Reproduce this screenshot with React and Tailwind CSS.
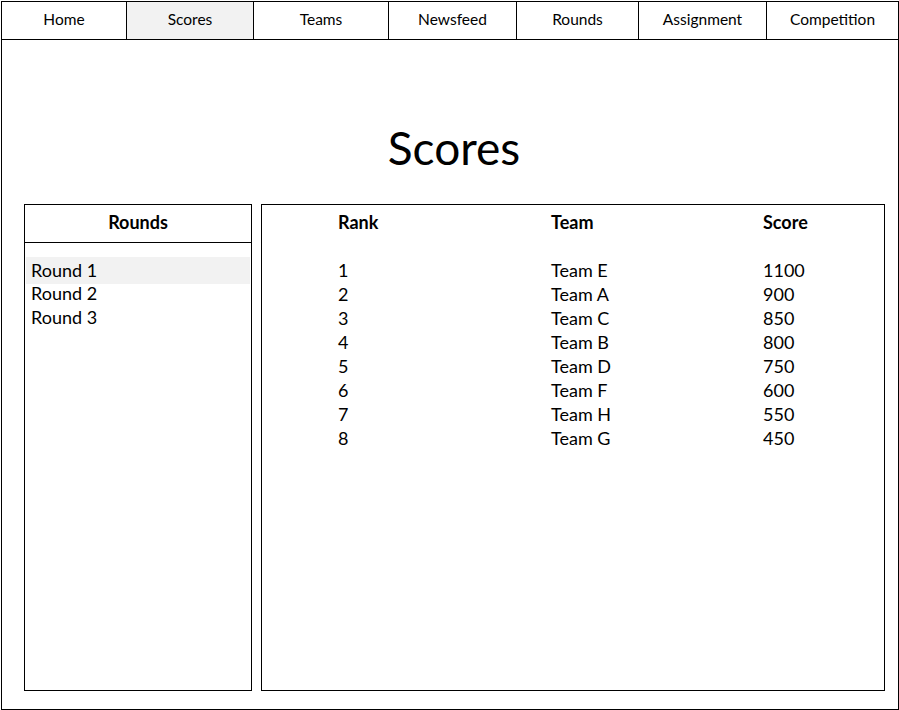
import React, { useState } from 'react';

const tabs = [
  { label: 'Home', w: 'w-[125px]' },
  { label: 'Scores', w: 'w-[127px]' },
  { label: 'Teams', w: 'w-[135px]' },
  { label: 'Newsfeed', w: 'w-[128px]' },
  { label: 'Rounds', w: 'w-[122px]' },
  { label: 'Assignment', w: 'w-[128px]' },
  { label: 'Competition', w: 'flex-1' },
];

const scores = [
  { rank: 1, team: 'Team E', score: 1100 },
  { rank: 2, team: 'Team A', score: 900 },
  { rank: 3, team: 'Team C', score: 850 },
  { rank: 4, team: 'Team B', score: 800 },
  { rank: 5, team: 'Team D', score: 750 },
  { rank: 6, team: 'Team F', score: 600 },
  { rank: 7, team: 'Team H', score: 550 },
  { rank: 8, team: 'Team G', score: 450 },
];

const App = () => {
  const [round, setRound] = useState(0);

  return (
    <div className="w-[899px] h-[710px] bg-white pl-px pt-px text-black font-['Lato',_'Open_Sans',_sans-serif]">
      <div className="w-[898px] h-[709px] border border-black flex flex-col">
        {/* Barre de navigation */}
        <nav className="flex h-[38px] border-b border-black text-[15.5px]">
          {tabs.map((t, i) => (
            <div
              key={t.label}
              className={`${t.w} flex items-center justify-center pb-[2px] ${i < tabs.length - 1 ? 'border-r border-black' : ''} ${t.label === 'Scores' ? 'bg-[#f2f2f2]' : ''}`}
            >
              {t.label}
            </div>
          ))}
        </nav>

        <h1 className="h-[164px] flex items-center justify-center pt-[52px] pl-[8px] text-[46px] leading-none">Scores</h1>

        <div className="flex gap-[9px] pl-[22px] pr-[13px] text-[18px]">
          {/* Liste des rounds */}
          <div className="w-[228px] h-[487px] border border-black flex flex-col">
            <div className="h-[38px] border-b border-black flex items-center justify-center font-bold pb-[2px]">Rounds</div>
            <ul className="pt-[14px] pl-px pr-px leading-[24px]">
              {['Round 1', 'Round 2', 'Round 3'].map((r, i) => (
                <li
                  key={r}
                  onClick={() => setRound(i)}
                  className={`pl-[5px] ${i === 0 ? 'h-[27px] pt-px -mb-[3px]' : 'h-[24px]'} ${round === i ? 'bg-[#f2f2f2]' : ''}`}
                >
                  {r}
                </li>
              ))}
            </ul>
          </div>

          {/* Tableau des scores */}
          <div className="flex-1 h-[487px] border border-black pt-[5px] leading-[24px]">
            <div className="grid grid-cols-[213px_212px_1fr] pl-[76px] font-bold">
              <span>Rank</span>
              <span>Team</span>
              <span>Score</span>
            </div>
            <div className="mt-[24px]">
              {scores.map(s => (
                <div key={s.rank} className="grid grid-cols-[213px_212px_1fr] pl-[76px]">
                  <span>{s.rank}</span>
                  <span>{s.team}</span>
                  <span>{s.score}</span>
                </div>
              ))}
            </div>
          </div>
        </div>
      </div>
    </div>
  );
};

export default App;
